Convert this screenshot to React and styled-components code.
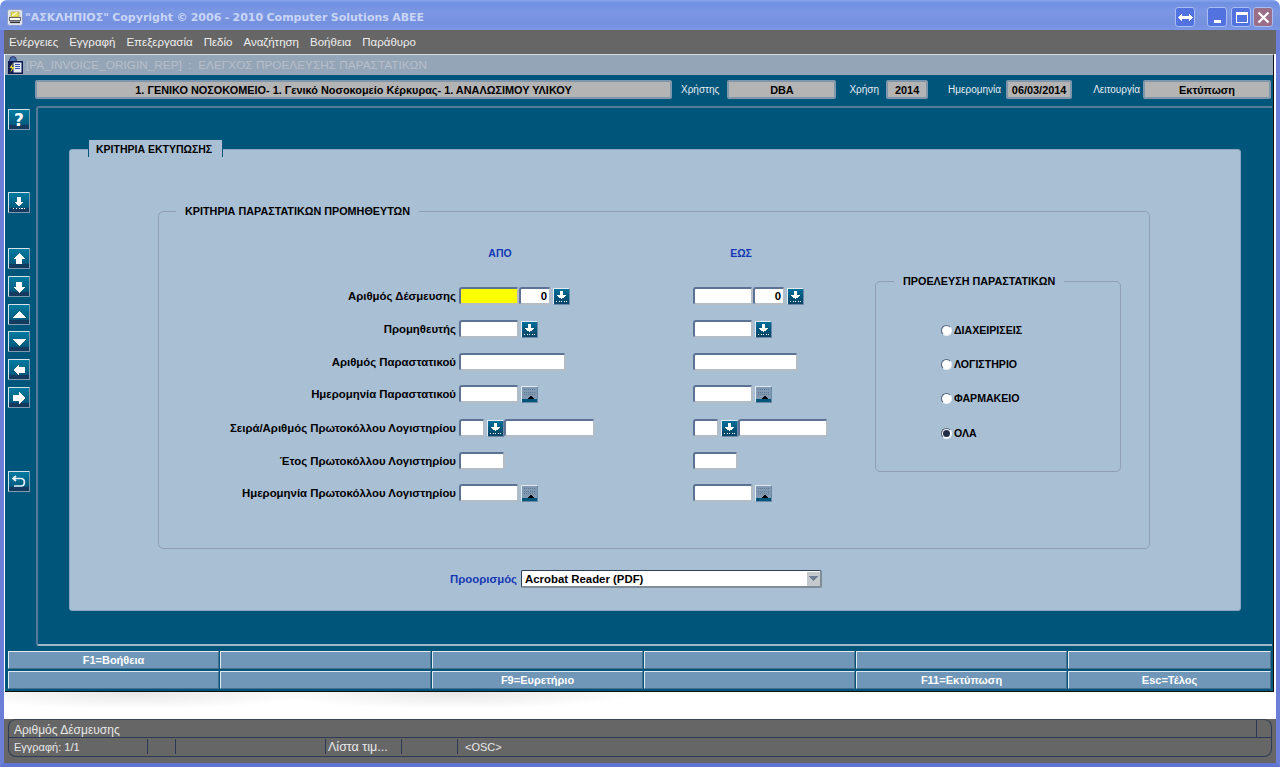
import React from "react";
import styled, { createGlobalStyle } from "styled-components";

const GlobalStyle = createGlobalStyle`
  html, body { margin: 0; padding: 0; background: #fff; }
  * { box-sizing: border-box; }
`;

const Screen = styled.div`
  width: 1280px;
  height: 767px;
  overflow: hidden;
  display: flex;
  flex-direction: column;
  font-family: "Liberation Sans", Arial, sans-serif;
  font-size: 11.4px;
  color: #000;
`;

const TitleBar = styled.div`
  height: 30px;
  flex: none;
  display: flex;
  align-items: center;
  padding: 4px 7px 0 7px;
  border-radius: 7px 7px 0 0;
  background: linear-gradient(#86a4ee 0, #6f8fe0 3px, #7c98e4 12px, #7490de 24px, #7b97e6 30px);
`;

const AppTitle = styled.div`
  margin-left: 2px;
  flex: 1;
  font-family: "DejaVu Sans", sans-serif;
  font-size: 11px;
  font-weight: bold;
  word-spacing: -0.5px;
  color: #c8d5f6;
  white-space: nowrap;
`;

const WinButton = styled.div`
  width: 20px;
  height: 20px;
  margin-left: ${(p) => p.$gap || 0}px;
  display: flex;
  align-items: center;
  justify-content: center;
  border: 1px solid #a9bdf0;
  border-radius: 3px;
  background: ${(p) => (p.$close ? "#9a6e86" : "#5272e0")};
`;

const Frame = styled.div`
  flex: 1;
  min-height: 0;
  display: flex;
  flex-direction: column;
  border-left: 4px solid #6b7fd8;
  border-right: 4px solid #6b7fd8;
  border-bottom: 4px solid #5f74d0;
`;

const MenuBar = styled.div`
  height: 24px;
  flex: none;
  display: flex;
  align-items: center;
  gap: 11px;
  padding-left: 5px;
  background: #666;
  color: #eee;
  font-size: 11.5px;
`;

const Workspace = styled.div`
  flex: none;
  height: 638px;
  padding-right: 2px;
  background: #fff;
  display: flex;
`;

const InnerWindow = styled.div`
  flex: 1;
  display: flex;
  flex-direction: column;
  margin-left: 1px;
  border-top: 1px solid #d6d9de;
  border-right: 1px solid #111;
  border-bottom: 1px solid #111;
  background: #00557a;
`;

const InnerTitle = styled.div`
  height: 20px;
  flex: none;
  display: flex;
  align-items: center;
  gap: 2px;
  padding-left: 2px;
  background: #95a5b8;
  color: #b6bfca;
  font-size: 11.8px;
  white-space: pre;
`;

const HeaderRow = styled.div`
  height: 31px;
  flex: none;
  display: flex;
  align-items: flex-start;
  padding: 5px 0 0 30px;
`;

const InfoLabel = styled.span`
  margin-left: ${(p) => p.$left}px;
  margin-right: ${(p) => p.$right}px;
  line-height: 19px;
  font-size: 10px;
  color: #e6edf2;
  white-space: nowrap;
`;

const InfoValue = styled.div`
  width: ${(p) => p.$w}px;
  height: 19px;
  flex: none;
  display: flex;
  align-items: center;
  justify-content: center;
  border: 2px solid #7f97ad;
  border-radius: 2px;
  background: #b4b4b4;
  font-size: 10.9px;
  font-weight: bold;
  white-space: nowrap;
`;

const Middle = styled.div`
  flex: 1;
  min-height: 0;
  display: flex;
`;

const Rail = styled.div`
  width: 31px;
  flex: none;
  display: flex;
  flex-direction: column;
  padding: 3px 0 0 3px;
`;

const RailButton = styled.div`
  width: 22px;
  height: 21px;
  flex: none;
  margin-top: ${(p) => p.$top || 0}px;
  display: flex;
  align-items: center;
  justify-content: center;
  border: 1px solid;
  border-color: #d5e2ea #7c9ab0 #7c9ab0 #d5e2ea;
  border-radius: 1px;
  background: linear-gradient(#007a9f 0, #005e82 13px, #00557a 15px, #143a60 15px, #143a60 100%);
  color: #fff;
  font-family: "DejaVu Sans", sans-serif;
  font-size: 17px;
  font-weight: bold;
`;

const ContentFrame = styled.div`
  flex: 1;
  min-width: 0;
  display: flex;
  margin-right: 1px;
  padding: 41px 31px 33px 31px;
  border-left: 2px solid #557a99;
  border-top: 2px solid #557a99;
  border-bottom: 2px solid #a4b6c6;
  border-radius: 3px 0 0 3px;
`;

const Panel = styled.div`
  position: relative;
  flex: 1;
  padding: 61px 90px 0 88px;
  background: #a9bfd4;
  border: 1px solid #8aa6c0;
  border-radius: 3px;
`;

const Tab = styled.div`
  position: absolute;
  left: 18px;
  top: -10px;
  width: 135px;
  height: 17px;
  padding-left: 7px;
  line-height: 19px;
  background: #a9bfd4;
  border-left: 1px solid #00557a;
  border-right: 1px solid #00557a;
  font-size: 10.5px;
  font-weight: bold;
`;

const GroupBox = styled.div`
  position: relative;
  height: 338px;
  display: flex;
  border: 1px solid #909fb1;
  border-radius: 5px;
`;

const Legend = styled.div`
  position: absolute;
  left: ${(p) => p.$left}px;
  top: -7px;
  padding: 0 9px;
  line-height: 13px;
  background: #a9bfd4;
  font-size: 10.8px;
  font-weight: bold;
  white-space: nowrap;
`;

const FormGrid = styled.div`
  display: grid;
  grid-template-columns: 300px 234px 182px;
  grid-template-rows: 42px 33px 33px 32px 34px 33px 32px 18px;
  padding-top: 33px;
  height: 100%;
  align-content: start;
`;

const ColumnHead = styled.div`
  grid-column: ${(p) => p.$col};
  grid-row: 1;
  width: ${(p) => p.$w}px;
  padding-top: 1px;
  text-align: center;
  color: #1538b4;
  font-weight: bold;
  font-size: 10.5px;
  line-height: 14px;
`;

const FieldLabel = styled.div`
  grid-row: ${(p) => p.$row};
  height: 18px;
  padding-right: 3px;
  text-align: right;
  line-height: 18px;
  font-weight: bold;
  white-space: nowrap;
`;

const FieldRow = styled.div`
  grid-row: ${(p) => p.$row};
  display: flex;
  height: 18px;
`;

const Input = styled.div`
  width: ${(p) => p.$w}px;
  height: 18px;
  flex: none;
  padding-right: 2px;
  text-align: right;
  line-height: 15px;
  font-weight: bold;
  background: ${(p) => (p.$active ? "#ffff00" : "#fff")};
  border: 2px solid;
  border-color: #5d7396 #b4bcc6 #b4bcc6 #5d7396;
  border-radius: 3px;
`;

const SmallButton = styled.div`
  width: 17px;
  height: 17px;
  flex: none;
  margin: 1px 0 0 2px;
  display: flex;
  align-items: center;
  justify-content: center;
  border: 1px solid;
  border-color: #e3ebf2 #6d89a8 #6d89a8 #e3ebf2;
  background: linear-gradient(#00709a, #00557a 55%, #0c4468);
`;

const CalButton = styled(SmallButton)`
  background: #00557a;
`;

const RadioBox = styled.div`
  position: relative;
  width: 246px;
  height: 191px;
  margin-top: 69px;
  padding: 40px 0 0 65px;
  border: 1px solid #909fb1;
  border-radius: 5px;
  display: flex;
  flex-direction: column;
`;

const RadioRow = styled.div`
  display: flex;
  align-items: center;
  gap: 2px;
  height: 16px;
  margin-bottom: ${(p) => p.$after}px;
  font-weight: bold;
  font-size: 10.6px;
`;

const RadioDot = styled.span`
  width: 11px;
  height: 11px;
  flex: none;
  display: flex;
  align-items: center;
  justify-content: center;
  border-radius: 50%;
  background: #fff;
  border: 1px solid;
  border-color: #4f5f78 #e9edf2 #e9edf2 #4f5f78;
  &::after {
    content: "";
    display: ${(p) => (p.$checked ? "block" : "none")};
    width: 7px;
    height: 7px;
    border-radius: 50%;
    background: #222e48;
  }
`;

const TargetRow = styled.div`
  display: flex;
  align-items: center;
  height: 18px;
  margin-top: 21px;
  padding-left: 292px;
`;

const TargetLabel = styled.span`
  margin-right: 4px;
  color: #1538b4;
  font-weight: bold;
`;

const Select = styled.div`
  width: 301px;
  height: 18px;
  display: flex;
  align-items: center;
  justify-content: space-between;
  padding: 1px 0 0 3px;
  background: #fff;
  border: 1px solid;
  border-color: #2c3e58 #7f8c9a #7f8c9a #2c3e58;
  border-width: 1px 2px 2px 1px;
  border-radius: 2px;
  font-weight: bold;
`;

const SelectArrow = styled.span`
  width: 13px;
  height: 14px;
  margin-top: -1px;
  display: flex;
  align-items: center;
  justify-content: center;
  background: #c4c9ce;
`;

const FKeys = styled.div`
  height: 45px;
  flex: none;
  display: grid;
  grid-template-columns: repeat(5, 211px) 203px;
  grid-template-rows: 18px 18px;
  gap: 2px 1px;
  padding: 5px 0 0 3px;
`;

const FKey = styled.div`
  display: flex;
  align-items: center;
  justify-content: center;
  background: #7096b8;
  border: 1px solid;
  border-color: #e3ebf2 #4a6f8c #4a6f8c #e3ebf2;
  border-radius: 1px;
  color: #fff;
  font-size: 11px;
  font-weight: bold;
`;

const ShadowStrip = styled.div`
  height: 27px;
  flex: none;
  background:
    radial-gradient(ellipse 190px 17px at 130px 0, #e6e6e6 0, rgba(255, 255, 255, 0) 100%),
    radial-gradient(ellipse 190px 17px at 450px 0, #e6e6e6 0, rgba(255, 255, 255, 0) 100%),
    #fff;
`;

const StatusBar = styled.div`
  flex: 1;
  background: #666;
  padding-right: 4px;
  color: #e8e8e8;
`;

const StatusInner = styled.div`
  height: 38px;
  margin-left: 4px;
  border: 1px solid #2c3a55;
  border-top-color: #3c4656;
  border-radius: 8px;
  display: flex;
  flex-direction: column;
`;

const HintLine = styled.div`
  height: 18px;
  flex: none;
  display: flex;
  justify-content: space-between;
  padding-left: 5px;
  line-height: 20px;
  font-size: 12px;
  border-bottom: 1px solid #2c3a55;
`;

const HintEnd = styled.div`
  width: 15px;
  border-left: 1px solid #2c3a55;
`;

const StatusCells = styled.div`
  flex: 1;
  display: flex;
  padding-top: 1px;
`;

const StatusCell = styled.div`
  width: ${(p) => p.$w}px;
  height: 15px;
  padding-left: ${(p) => p.$pad || 0}px;
  line-height: 17px;
  white-space: nowrap;
  border-right: ${(p) => (p.$last ? "none" : "1px solid #2c3a55")};
  font-size: ${(p) => p.$size || 11}px;
`;

// drawn glyphs
const ArrowGlyph = ({ dir }) => {
  const shapes = {
    up: "8,2 14,8 11,8 11,13 5,13 5,8 2,8",
    down: "8,14 14,8 11,8 11,3 5,3 5,8 2,8",
    tup: "8,4 15,11 1,11",
    tdown: "8,12 15,5 1,5",
    left: "2,8 8,2 8,5 14,5 14,11 8,11 8,14",
    right: "14,8 8,2 8,5 2,5 2,11 8,11 8,14",
  };
  return (
    <svg width="16" height="16" viewBox="0 0 16 16" shapeRendering="crispEdges">
      <polygon points={shapes[dir]} fill="#fff" />
    </svg>
  );
};

const LovGlyph = ({ size = 16 }) => (
  <svg width={size} height={size} viewBox="0 0 16 16" shapeRendering="crispEdges">
    <polygon points="8,11 13,6.5 10,6.5 10,2 6,2 6,6.5 3,6.5" fill="#fff" />
    <path d="M2 13.5h12" stroke="#fff" strokeWidth="1.4" strokeDasharray="1.4 1.4" />
  </svg>
);

const ReturnGlyph = () => (
  <svg width="16" height="16" viewBox="0 0 16 16">
    <path d="M5 2 L2 4.5 L5 7 M2.5 4.5 H10 C14.5 4.5 14.5 12 10 12 H3" fill="none" stroke="#e8f0f6" strokeWidth="1.7" />
  </svg>
);

const CalGlyph = () => (
  <svg width="15" height="15" viewBox="0 0 15 15" shapeRendering="crispEdges">
    <rect x="0" y="0" width="15" height="12" fill="#8199b2" />
    <path d="M2 2.5h11M2 5h11M2 7.5h11" stroke="#5c7892" strokeWidth="1" strokeDasharray="1 1" />
    <polygon points="9,8.5 12.5,12 5.5,12" fill="#000" />
    <rect x="0" y="12" width="15" height="3" fill="#00557a" />
  </svg>
);

const AppIcon = () => (
  <svg width="16" height="17" viewBox="0 0 16 17">
    <rect x="0.5" y="0.5" width="15" height="16" rx="2" fill="#dfe3ee" stroke="#8f9dcc" />
    <rect x="4" y="3" width="8" height="5" fill="#e8e060" stroke="#a69a30" strokeWidth="0.6" />
    <path d="M5 7 L10 3" stroke="#fff" strokeWidth="1" />
    <rect x="2.5" y="8.5" width="11" height="3" fill="#fff" stroke="#444" strokeWidth="0.8" />
    <rect x="3" y="12.5" width="10" height="1.6" fill="#333" />
  </svg>
);

const DocIcon = () => (
  <svg width="17" height="19" viewBox="0 0 17 19">
    <circle cx="6" cy="4" r="3.4" fill="#4a6fb0" stroke="#1f2a5a" strokeWidth="0.8" />
    <rect x="1" y="5" width="15" height="13" fill="#0b1a50" />
    <rect x="6.5" y="6.5" width="8" height="10" fill="#e6eaf2" />
    <path d="M8 8.5h5M8 10.5h5M8 12.5h5" stroke="#2540a0" strokeWidth="0.9" />
    <polygon points="6,7 2.5,12 5,12 3,17 7.5,11 5,11" fill="#f4e030" />
  </svg>
);

const Lov = () => (
  <SmallButton>
    <LovGlyph size={15} />
  </SmallButton>
);

const Cal = () => (
  <CalButton>
    <CalGlyph />
  </CalButton>
);

const Field = ({ label, row, from, to }) => (
  <>
    <FieldLabel $row={row}>{label}</FieldLabel>
    <FieldRow $row={row}>{from}</FieldRow>
    <FieldRow $row={row}>{to}</FieldRow>
  </>
);

const topKeys = ["F1=Βοήθεια", "", "", "", "", ""];
const bottomKeys = ["", "", "F9=Ευρετήριο", "", "F11=Εκτύπωση", "Esc=Τέλος"];
const menus = ["Ενέργειες", "Εγγραφή", "Επεξεργασία", "Πεδίο", "Αναζήτηση", "Βοήθεια", "Παράθυρο"];

export default function App() {
  return (
    <Screen>
      <GlobalStyle />
      <TitleBar>
        <AppIcon />
        <AppTitle>"ΑΣΚΛΗΠΙΟΣ" Copyright © 2006 - 2010 Computer Solutions ΑΒΕΕ</AppTitle>
        <WinButton>
          <svg width="15" height="9" viewBox="0 0 15 9" shapeRendering="crispEdges">
            <polygon points="0,4.5 4,0.5 4,3 11,3 11,0.5 15,4.5 11,8.5 11,6 4,6 4,8.5" fill="#fff" />
          </svg>
        </WinButton>
        <WinButton $gap={12}>
          <svg width="13" height="13" viewBox="0 0 13 13" shapeRendering="crispEdges">
            <rect x="3" y="9" width="7" height="3" fill="#fff" />
          </svg>
        </WinButton>
        <WinButton $gap={4}>
          <svg width="13" height="13" viewBox="0 0 13 13" shapeRendering="crispEdges">
            <rect x="1" y="1.5" width="11" height="10" fill="none" stroke="#fff" strokeWidth="1" />
            <rect x="1" y="1" width="11" height="3" fill="#fff" />
          </svg>
        </WinButton>
        <WinButton $gap={2} $close>
          <svg width="13" height="13" viewBox="0 0 13 13">
            <path d="M1.5 1.5 L11.5 11.5 M11.5 1.5 L1.5 11.5" stroke="#fff" strokeWidth="2.2" />
          </svg>
        </WinButton>
      </TitleBar>
      <Frame>
        <MenuBar>
          {menus.map((m) => (
            <span key={m}>{m}</span>
          ))}
        </MenuBar>
        <Workspace>
          <InnerWindow>
            <InnerTitle>
              <DocIcon />
              [PA_INVOICE_ORIGIN_REP]  :  ΕΛΕΓΧΟΣ ΠΡΟΕΛΕΥΣΗΣ ΠΑΡΑΣΤΑΤΙΚΩΝ
            </InnerTitle>
            <HeaderRow>
              <InfoValue $w={637}>1. ΓΕΝΙΚΟ ΝΟΣΟΚΟΜΕΙΟ- 1. Γενικό Νοσοκομείο Κέρκυρας- 1. ΑΝΑΛΩΣΙΜΟΥ ΥΛΙΚΟΥ</InfoValue>
              <InfoLabel $left={9} $right={8}>Χρήστης</InfoLabel>
              <InfoValue $w={109}>DBA</InfoValue>
              <InfoLabel $left={13} $right={7}>Χρήση</InfoLabel>
              <InfoValue $w={42}>2014</InfoValue>
              <InfoLabel $left={20} $right={5}>Ημερομηνία</InfoLabel>
              <InfoValue $w={66}>06/03/2014</InfoValue>
              <InfoLabel $left={21} $right={3}>Λειτουργία</InfoLabel>
              <InfoValue $w={128}>Εκτύπωση</InfoValue>
            </HeaderRow>
            <Middle>
              <Rail>
                <RailButton>?</RailButton>
                <RailButton $top={62}><LovGlyph /></RailButton>
                <RailButton $top={35}><ArrowGlyph dir="up" /></RailButton>
                <RailButton $top={7}><ArrowGlyph dir="down" /></RailButton>
                <RailButton $top={7}><ArrowGlyph dir="tup" /></RailButton>
                <RailButton $top={6}><ArrowGlyph dir="tdown" /></RailButton>
                <RailButton $top={7}><ArrowGlyph dir="left" /></RailButton>
                <RailButton $top={7}><ArrowGlyph dir="right" /></RailButton>
                <RailButton $top={63}><ReturnGlyph /></RailButton>
              </Rail>
              <ContentFrame>
                <Panel>
                  <Tab>ΚΡΙΤΗΡΙΑ ΕΚΤΥΠΩΣΗΣ</Tab>
                  <GroupBox>
                    <Legend $left={17}>ΚΡΙΤΗΡΙΑ ΠΑΡΑΣΤΑΤΙΚΩΝ ΠΡΟΜΗΘΕΥΤΩΝ</Legend>
                    <FormGrid>
                      <ColumnHead $col={2} $w={82}>ΑΠΟ</ColumnHead>
                      <ColumnHead $col={3} $w={96}>ΕΩΣ</ColumnHead>
                      <Field
                        label="Αριθμός Δέσμευσης"
                        row={2}
                        from={<><Input $w={60} $active /><Input $w={32}>0</Input><Lov /></>}
                        to={<><Input $w={60} /><Input $w={32}>0</Input><Lov /></>}
                      />
                      <Field
                        label="Προμηθευτής"
                        row={3}
                        from={<><Input $w={60} /><Lov /></>}
                        to={<><Input $w={60} /><Lov /></>}
                      />
                      <Field
                        label="Αριθμός Παραστατικού"
                        row={4}
                        from={<Input $w={107} />}
                        to={<Input $w={105} />}
                      />
                      <Field
                        label="Ημερομηνία Παραστατικού"
                        row={5}
                        from={<><Input $w={60} /><Cal /></>}
                        to={<><Input $w={60} /><Cal /></>}
                      />
                      <Field
                        label="Σειρά/Αριθμός Πρωτοκόλλου Λογιστηρίου"
                        row={6}
                        from={<><Input $w={26} /><Lov /><Input $w={91} /></>}
                        to={<><Input $w={26} /><Lov /><Input $w={90} /></>}
                      />
                      <Field
                        label="Έτος Πρωτοκόλλου Λογιστηρίου"
                        row={7}
                        from={<Input $w={46} />}
                        to={<Input $w={45} />}
                      />
                      <Field
                        label="Ημερομηνία Πρωτοκόλλου Λογιστηρίου"
                        row={8}
                        from={<><Input $w={60} /><Cal /></>}
                        to={<><Input $w={60} /><Cal /></>}
                      />
                    </FormGrid>
                    <RadioBox>
                      <Legend $left={18}>ΠΡΟΕΛΕΥΣΗ ΠΑΡΑΣΤΑΤΙΚΩΝ</Legend>
                      <RadioRow $after={18}><RadioDot />ΔΙΑΧΕΙΡΙΣΕΙΣ</RadioRow>
                      <RadioRow $after={18}><RadioDot />ΛΟΓΙΣΤΗΡΙΟ</RadioRow>
                      <RadioRow $after={19}><RadioDot />ΦΑΡΜΑΚΕΙΟ</RadioRow>
                      <RadioRow $after={0}><RadioDot $checked />ΟΛΑ</RadioRow>
                    </RadioBox>
                  </GroupBox>
                  <TargetRow>
                    <TargetLabel>Προορισμός</TargetLabel>
                    <Select>
                      Acrobat Reader (PDF)
                      <SelectArrow>
                        <svg width="9" height="5" viewBox="0 0 9 5" shapeRendering="crispEdges">
                          <polygon points="0,0 9,0 4.5,5" fill="#6f7f96" />
                        </svg>
                      </SelectArrow>
                    </Select>
                  </TargetRow>
                </Panel>
              </ContentFrame>
            </Middle>
            <FKeys>
              {topKeys.map((k, i) => (
                <FKey key={"t" + i}>{k}</FKey>
              ))}
              {bottomKeys.map((k, i) => (
                <FKey key={"b" + i}>{k}</FKey>
              ))}
            </FKeys>
          </InnerWindow>
        </Workspace>
        <ShadowStrip />
        <StatusBar>
          <StatusInner>
            <HintLine>
              Αριθμός Δέσμευσης
              <HintEnd />
            </HintLine>
            <StatusCells>
              <StatusCell $w={139} $pad={5}>Εγγραφή: 1/1</StatusCell>
              <StatusCell $w={28} />
              <StatusCell $w={150} />
              <StatusCell $w={76} $pad={2} $size={12.5}>Λίστα τιμ...</StatusCell>
              <StatusCell $w={56} />
              <StatusCell $last $pad={7} $size={11}>{"<OSC>"}</StatusCell>
            </StatusCells>
          </StatusInner>
        </StatusBar>
      </Frame>
    </Screen>
  );
}
